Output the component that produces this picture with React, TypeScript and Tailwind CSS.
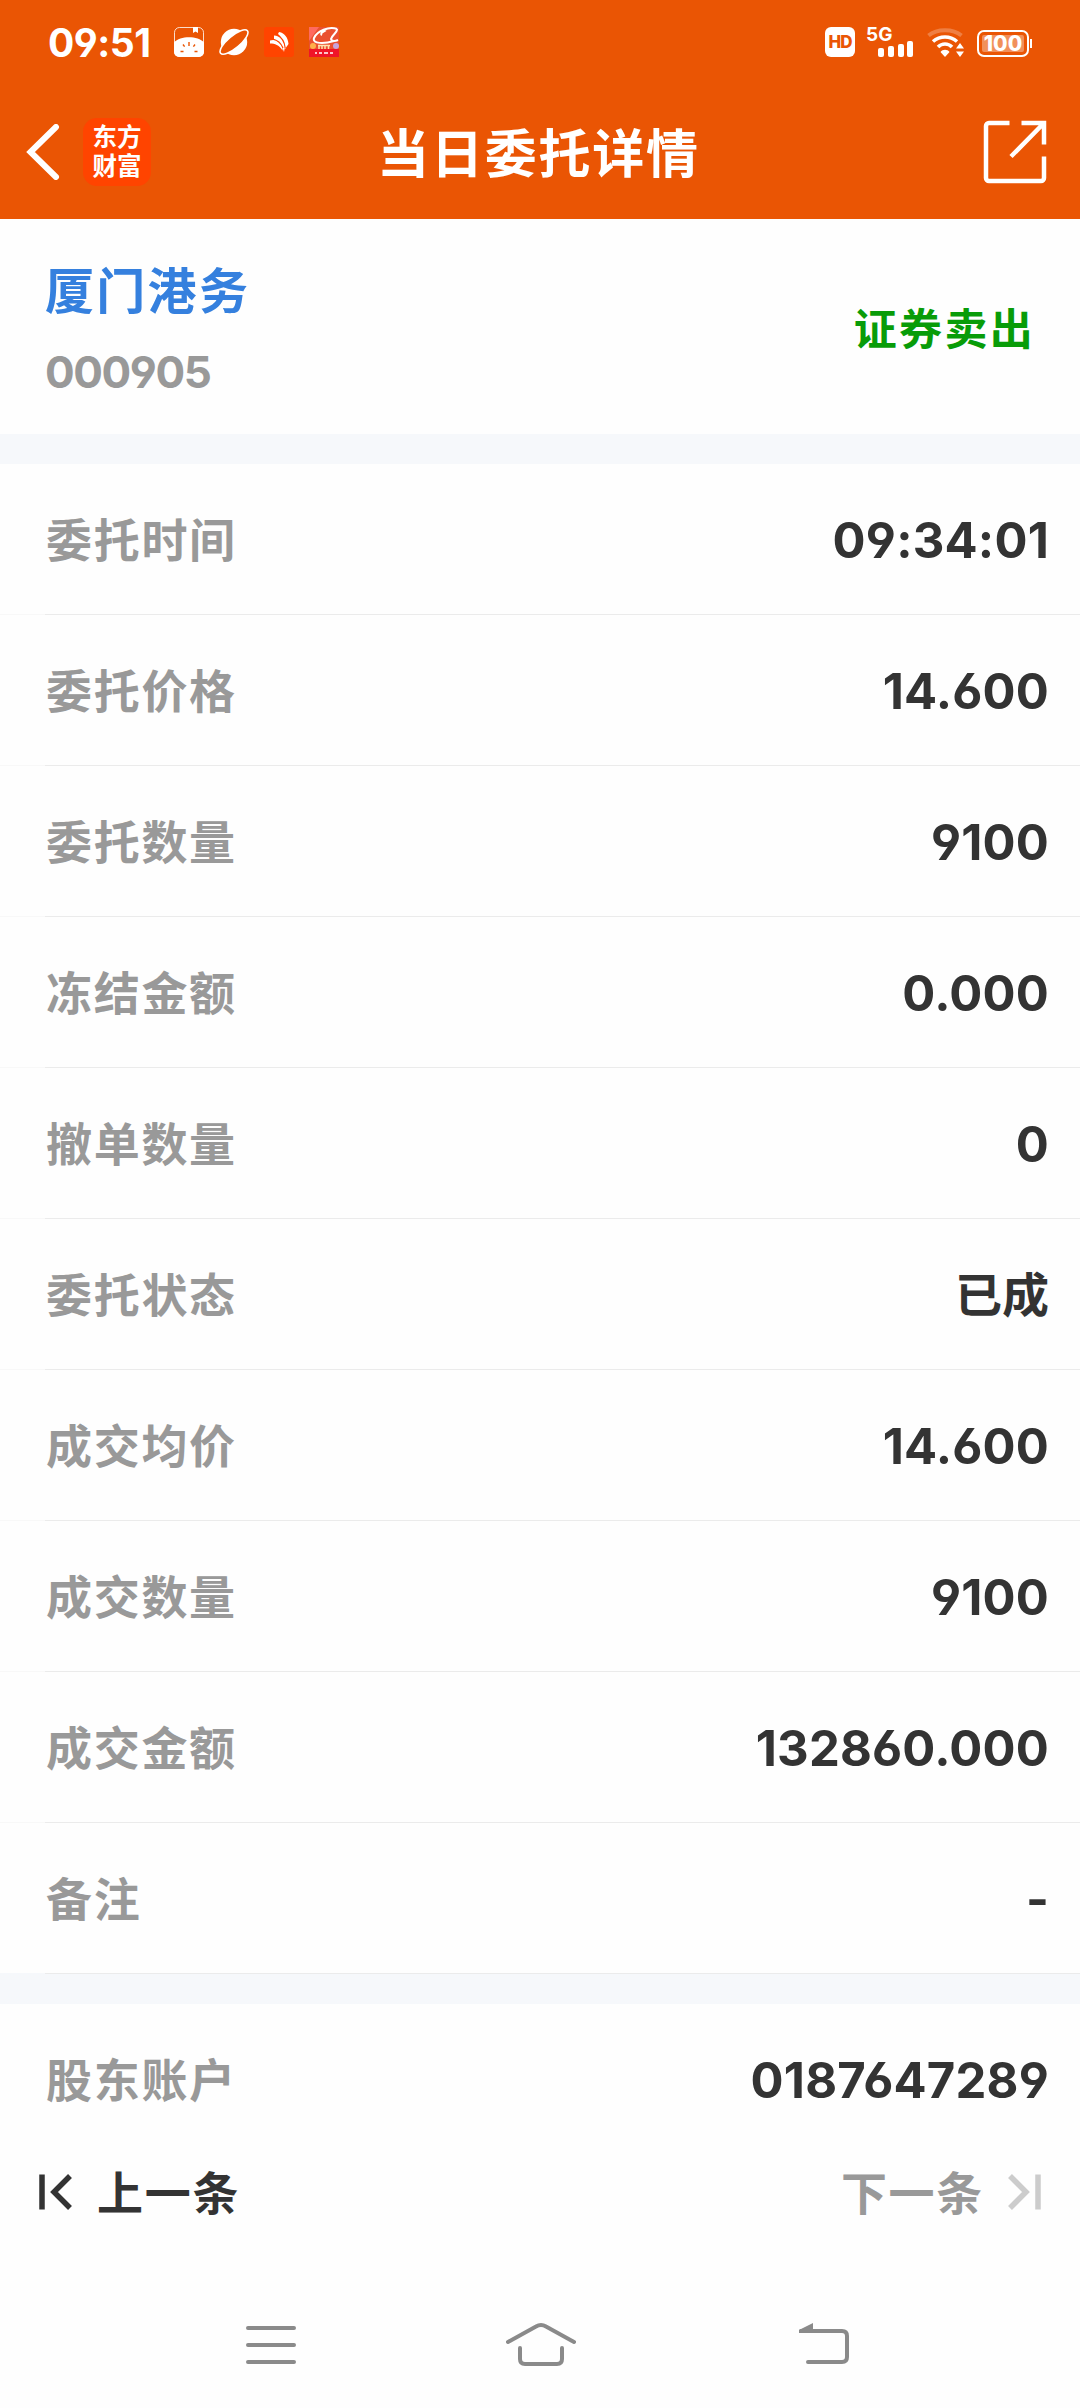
import clsx from 'clsx';

interface DetailRow {
    label: string;
    value: string;
}

const orderRows: DetailRow[] = [
    { label: '委托时间', value: '09:34:01' },
    { label: '委托价格', value: '14.600' },
    { label: '委托数量', value: '9100' },
    { label: '冻结金额', value: '0.000' },
    { label: '撤单数量', value: '0' },
    { label: '委托状态', value: '已成' },
    { label: '成交均价', value: '14.600' },
    { label: '成交数量', value: '9100' },
    { label: '成交金额', value: '132860.000' },
    { label: '备注', value: '-' },
];

function StatusBar() {
    return (
        <div className="flex h-[84px] items-center pl-12 pr-12">
            <span className="w-[126px] text-[39px] font-bold leading-none tracking-[-0.500px]">09:51</span>
            <div className="flex gap-[15px]">
                {/* weather card */}
                <svg className="size-[30px]" viewBox="0 0 30 30" fill="none">
                    <rect x="0.5" y="0.5" width="29" height="29" rx="5" stroke="#fff" strokeOpacity="0.8" />
                    <path d="M19 0h5v6l-2.500-1.500L19 6z" fill="#fff" />
                    <path d="M0 15.500C6 8.500 24 8.500 30 15.500V25a5 5 0 0 1-5 5H5a5 5 0 0 1-5-5z" fill="#fff" />
                    <path d="M15 15v4M9 17.500l1.600 2.200M21 17.500l-1.600 2.200M6.500 24.500h3M20.500 24.500h3" stroke="#ea5504" strokeWidth="1.400" />
                </svg>
                {/* planet */}
                <svg className="size-[30px]" viewBox="0 0 30 30">
                    <circle cx="15" cy="15" r="13.2" fill="#fff" />
                    <ellipse cx="15" cy="15" rx="17.500" ry="6" transform="rotate(-40 15 15)" fill="#ea5504" stroke="#fff" strokeWidth="1.600" />
                </svg>
                <svg className="size-[30px]" viewBox="0 0 30 30">
                    <rect width="30" height="30" rx="3" fill="#ff4400" />
                    <path d="M15 5c6 1 9 6 9.500 12l-3.500 5c0-7-3-10-7-15z" fill="#fff" />
                    <path d="M10 8.500c6 0 10 5 11 11L20 25c-2-7-5-10-10-13z" fill="#fff" />
                    <path d="M6 13.500c5-2 10 1 12.500 7v3C15 18 11 16.500 6 16.500z" fill="#fff" />
                    <path d="M12.500 7c5 3 8 7 8.700 14M8.500 12c5 1 8.500 4 10.500 9" fill="none" stroke="#ff4400" strokeWidth="1.200" />
                </svg>
                {/* shopping promo badge */}
                <svg className="size-[30px]" viewBox="0 0 30 30">
                    <rect width="30" height="30" fill="#ea5030" />
                    <path d="M0 0h10L0 14z" fill="#ff6a60" />
                    <path d="M28 2C20-1 8 4 5 11c-2 6 10 6 20 3M28 2c1 3-5 6-6 10 1 3 5 2 7 1M17 3c-4 2-6 4-4 5" fill="none" stroke="#fff" strokeWidth="2" />
                    <circle cx="4" cy="19" r="3" fill="#ffb04b" />
                    <circle cx="27" cy="19" r="3" fill="#c7a4dc" />
                    <path d="M9 18.500h12M10 18v4M13 18v4M16 18v4M19.500 18v4" stroke="#ffe4b0" strokeWidth="1.500" />
                    <rect y="22" width="30" height="8" fill="#f01428" />
                    <path d="M6 26h2M10 26h3M15 26h4M21 26h3" stroke="#fff" strokeWidth="1.600" />
                </svg>
            </div>

            <div className="ml-auto flex items-center">
                <span className="flex size-[30px] items-center justify-center rounded-[6px] bg-white text-[17px] font-extrabold leading-none tracking-[-1px] text-[#ea5504]">
                    HD
                </span>
                <div className="ml-[11px] flex h-[30px] w-[50px] flex-col">
                    <span className="h-[14px] text-[19px] font-bold leading-[15px]">5G</span>
                    <svg className="ml-3 h-4 w-[37px]" viewBox="0 0 37 16" fill="#fff">
                        <rect x="0" y="7" width="6" height="9" rx="2" />
                        <rect x="10" y="5" width="6" height="11" rx="2" />
                        <rect x="20" y="3" width="6" height="13" rx="2" />
                        <rect x="29" y="0" width="6" height="16" rx="2" />
                    </svg>
                </div>
                <svg className="ml-[11px] h-[30px] w-[37px]" viewBox="0 0 37 30" fill="none">
                    <path d="M1.500 8.500C10 1.500 26 1.500 34.500 8.500" stroke="#fff" strokeOpacity="0.25" strokeWidth="4" />
                    <path d="M6 14.500c7-6 17-6 24 0" stroke="#fff" strokeWidth="3.600" />
                    <path d="M11 20c4-4 10-4 14 0" stroke="#fff" strokeWidth="3.600" />
                    <path d="M13.500 25c2-3 7-3 9 0L18 30z" fill="#fff" />
                    <path d="M29 21.500l4-5.500 4 5.500zM29 24.500l4 5.500 4-5.500z" fill="#fff" />
                </svg>
                <div className="ml-[13px] mt-[3px] flex h-[27px] w-[52px] items-center justify-center rounded-[7px] border-2 border-white p-[3px]">
                    <span className="flex h-[17px] w-full items-center justify-center rounded-[2px] bg-white/35 text-[21px] font-extrabold leading-none">
                        100
                    </span>
                </div>
                <span className="ml-px mt-[3px] h-[9px] w-0.5 bg-white" />
            </div>
        </div>
    );
}

function TitleBar() {
    return (
        <div className="grid h-[135px] grid-cols-[1fr_auto_1fr] items-center pl-[26px] pr-[33px]">
            <div className="flex items-center">
                <svg className="h-[56px] w-[34px]" viewBox="0 0 34 56" fill="none">
                    <path d="M30 3L4.500 28 30 53" stroke="#fff" strokeWidth="6" strokeLinecap="round" />
                </svg>
                <div className="ml-[23px] flex size-[68px] flex-col items-center justify-center rounded-[14px] bg-[#ff4400] text-[24.500px] font-bold leading-[29px]">
                    <span>东方</span>
                    <span>财富</span>
                </div>
            </div>
            <h1 className="pl-1 pt-1.5 text-[52px] font-bold leading-none tracking-[1.800px]">当日委托详情</h1>
            <svg className="ml-auto size-16" viewBox="0 0 64 64" fill="none" stroke="#fff" strokeWidth="4.500">
                <path d="M26.500 3H6a3 3 0 0 0-3 3v52a3 3 0 0 0 3 3h52a3 3 0 0 0 3-3V36.500" />
                <path d="M38.500 3H61v21.500M61 3L28 36.500" />
            </svg>
        </div>
    );
}

function Row({ label, value }: DetailRow) {
    return (
        <div className="flex h-[150px] items-center justify-between pl-[46px] pr-[31px] pt-[3px]">
            <span className="text-[46px] font-bold tracking-[1.700px] text-[#999999]">{label}</span>
            <span
                className={clsx(
                    'font-bold text-[#333333]',
                    value === '已成' ? 'text-[47px]' : 'text-[49px] tracking-[0.200px]'
                )}
            >
                {value}
            </span>
        </div>
    );
}

export default function App() {
    return (
        <div className="flex h-[2408px] w-[1080px] flex-col bg-[#fefefe] font-['Inter','Noto_Sans_CJK_SC',sans-serif] [font-feature-settings:'cv03','cv04','ss03']">
            <header className="h-[219px] bg-[#ea5504] text-white">
                <StatusBar />
                <TitleBar />
            </header>

            <section className="flex h-[215px] items-center justify-between pl-[45px] pr-[45px]">
                <div className="flex flex-col pt-[11px]">
                    <span className="text-[49px] font-bold leading-[80px] tracking-[2.300px] text-[#3580de]">厦门港务</span>
                    <span className="text-[44px] font-bold leading-[80px] tracking-[-1.400px] text-[#999999]">000905</span>
                </div>
                <span className="pt-1.5 text-[43px] font-bold tracking-[2.300px] text-[#089c08]">证券卖出</span>
            </section>

            <div className="h-[30px] bg-[#f6f8fb]" />

            {orderRows.map((row, index) => (
                <div key={row.label}>
                    <Row {...row} />
                    <div className="flex h-px">
                        <div className={clsx('w-[45px]', index === orderRows.length - 1 ? 'bg-[#f6f8fb]' : 'bg-[#f8f8f8]')} />
                        <div className="flex-1 bg-[#ebebeb]" />
                    </div>
                </div>
            ))}

            <div className="h-[30px] bg-[#f6f8fb]" />
            <Row label="股东账户" value="0187647289" />

            <div className="flex h-[76px] items-center justify-between pl-[39px] pr-[39px] text-[46px] font-bold tracking-[1.700px]">
                <button className="flex items-center gap-[24px] text-[#333333]">
                    <svg className="h-9 w-[34px]" viewBox="0 0 34 36" fill="none" stroke="currentColor" strokeWidth="5.500">
                        <path d="M3 0.500v35M31 2L15 18l16 16" />
                    </svg>
                    <span className="pt-[3px]">上一条</span>
                </button>
                <button className="flex items-center gap-[23px] text-[#999999]">
                    <span className="pt-[3px]">下一条</span>
                    <svg className="h-9 w-[34px] text-[#cccccc]" viewBox="0 0 34 36" fill="none" stroke="currentColor" strokeWidth="5.500">
                        <path d="M31 0.500v35M3 2l16 16L3 34" />
                    </svg>
                </button>
            </div>

            {/* system navigation */}
            <nav className="mt-[91px] flex h-12 items-center pl-[246px]">
                <svg className="h-12 w-[50px]" viewBox="0 0 50 48" stroke="#8a8a8a" strokeWidth="4" strokeLinecap="round">
                    <path d="M2 7h46M2 24h46M2 41h46" />
                </svg>
                <svg className="ml-[210px] h-12 w-[70px]" viewBox="0 0 70 48" fill="none" stroke="#8a8a8a" strokeWidth="4" strokeLinecap="round">
                    <path d="M2 21L30 5.500q5-3 10 0L68 21M14 27v11q0 5 5 5h32q5 0 5-5V27" />
                </svg>
                <svg className="ml-[222px] h-12 w-[52px]" viewBox="0 0 52 48" fill="none" stroke="#8a8a8a" strokeWidth="4" strokeLinecap="round">
                    <path d="M3 10h41q5 0 5 5v21q0 5-5 5H10" />
                    <path d="M15 2L1 9v3h14z" fill="#8a8a8a" stroke="none" />
                </svg>
            </nav>
        </div>
    );
}
